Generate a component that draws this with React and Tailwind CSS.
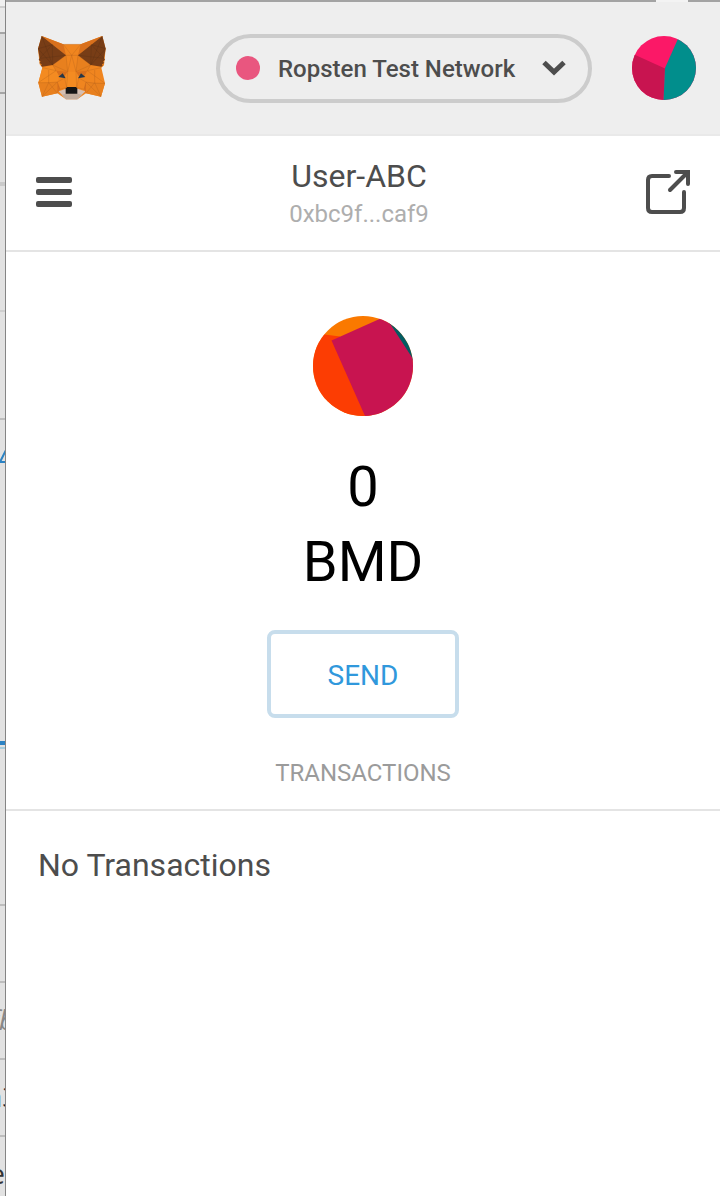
function Fox() {
  return (
    <svg viewBox="24 30 204 192" className="h-16 w-17" strokeLinejoin="round" aria-hidden="true">
      <path fill="#F0851F" d="M35 30 100 55H152L217 30 227 68 222 118 214 125 225 172 213 212 168 202 142 220H108L82 202 36 212 25 170 37 125 29 115 24 68Z" />
      <path fill="#E8801E" d="M68 117 108 88 113 137 78 134ZM182 117 144 88 138 137 172 134ZM25 170 82 168 82 202 36 212ZM225 172 168 168 168 202 213 212Z" />
      <path fill="#D9701C" d="M78 134 113 137 104 150 88 151ZM172 134 138 137 146 150 163 151ZM82 168 90 190 82 202ZM168 168 162 190 168 202ZM35 30 100 55 108 88ZM217 30 152 55 144 88Z" />
      <path fill="#F48B21" d="M113 137H138L146 156 140 184H110L104 156ZM37 125 68 117 78 134 88 153 82 168 25 170Z" />
      <path fill="#783D16" d="M35 30 108 88 68 117 37 122 33 119 35 115 28 111 32 107 26 101 29 97 24 68ZM217 30 144 88 182 117 214 122 218 119 216 115 223 111 219 107 225 101 222 97 227 68Z" />
      <path fill="#D5BFB2" d="M86 196 108 188H142L166 196 142 220H108Z" />
      <path fill="#C0AC9D" d="M96 206 108 203H142L156 206 142 220H108Z" />
      <path fill="#263748" d="M85 153 98 142 107 157ZM166 153 153 142 144 157Z" />
      <path fill="#151515" d="M112 183H138L142 187V203H107V187Z" />
      <g fill="none" stroke="#A4571B" strokeWidth="1.5" opacity=".5">
        <path d="M100 55 125 88 152 55M100 55H152M108 88H144M108 88 113 137M144 88 138 137M113 137 125 88 138 137M68 117 108 88M182 117 144 88M68 117 113 137M182 117 138 137M68 117 78 134 25 170M182 117 172 134 225 172M37 125 78 134M214 125 172 134M25 170H56L82 168 104 156M225 172H194L168 168 146 156M56 170 36 212 82 168M194 170 213 212 168 168M56 132V170L82 202M194 132V170L168 202M82 168 90 190 110 184 104 156M168 168 162 190 140 184 146 156M113 137 110 184M138 137 140 184" />
      </g>
      <g fill="none" stroke="#4F2B13" strokeWidth="1.5" opacity=".5">
        <path d="M35 30 68 117 24 68 67 56 29 97 108 88M67 56 68 117M217 30 182 117 227 68 184 56 222 97 144 88M184 56 182 117" />
      </g>
    </svg>
  );
}

function AccountBadge() {
  return (
    <svg viewBox="0 0 64 64" className="size-16 rounded-full" aria-hidden="true">
      <path fill="#FB1867" d="M0 0H64V64H0Z" />
      <path fill="#C81450" d="M0 17.5 33 32.5 31.5 64H0Z" />
      <path fill="#018E8C" d="M33 32 49 -4H64V64H31.5Z" />
    </svg>
  );
}

function TokenBadge() {
  return (
    <svg viewBox="0 0 100 100" className="size-[100px] rounded-full" aria-hidden="true">
      <path fill="#FA7900" d="M0 0H100V100H0Z" />
      <path fill="#FC3D03" d="M0 17 27 20.5 60 100H0Z" />
      <path fill="#035B62" d="M74 0H100V45L76 7Z" />
      <path fill="#C81450" d="M18.5 24.5 71 1 76 6 100 43V100H52Z" />
    </svg>
  );
}

function BackgroundPage() {
  return (
    <div className="w-1.5 shrink-0 overflow-hidden border-r border-[#858585] bg-[#e2e2e2] font-['Open_Sans',sans-serif] text-[28px] leading-8" aria-hidden="true">
      <div className="h-2 border-b-2 border-[#cfcfcf] bg-[#f0f0f0]" />
      <div className="h-[26px] border-b-2 border-[#a5a5a5] bg-[#e9e9e9]" />
      <div className="h-15 border-b-2 border-[#a5a5a5] bg-[#dcdcdc]" />
      <div className="h-23 border-b-4 border-[#cacaca]" />
      <div className="h-[126px] border-b-2 border-[#cfcfcf]" />
      <div className="h-27 border-b-2 border-[#bdbdbd]" />
      <div className="flex h-[325px] justify-start border-b-4 border-[#2c83c4] pt-6">
        <svg viewBox="0 0 5 14" className="mt-1.5 h-3.5 w-[5px] shrink-0" fill="none" stroke="#2c83c4" strokeWidth="2">
          <path d="M6 0 0 12H6" />
        </svg>
      </div>
      <div className="h-1 border-b-2 border-[#a8cede]" />
      <div className="h-[157px] border-b-2 border-[#bdbdbd]" />
      <div className="h-[77px] border-b-2 border-[#bdbdbd]" />
      <div className="flex h-[77px] justify-center border-b-2 border-[#bdbdbd] pt-5 text-[#888888] italic">fb</div>
      <div className="flex h-[77px] justify-center border-b-2 border-[#bdbdbd] pt-5 text-[#1b2233]">a3</div>
      <div className="flex h-[59px] justify-end pt-5 text-[#333333]">e</div>
    </div>
  );
}

export default function App() {
  return (
    <div className="flex min-h-screen bg-white font-[Roboto,sans-serif] text-[#4d4d4d]">
      <BackgroundPage />
      <main className="flex min-w-0 flex-1 flex-col">
        <div className="flex h-0.5 justify-end bg-[#a3a3a3] pr-8" aria-hidden="true">
          <div className="w-8 bg-[#f3f3f3]" />
        </div>
        <header className="flex h-[134px] items-center justify-between border-b-2 border-[#e9e9e9] bg-[#eeeeee] pr-6 pl-8">
          <Fox />
          <div className="flex items-center gap-10">
            <button type="button" className="flex h-[69px] w-[376px] items-center rounded-full border-4 border-[#cccccc] pr-[22px] pl-4">
              <span className="size-6 rounded-full bg-[#e9567f]" />
              <span className="ml-[18px] pt-0.5 text-[24px] leading-8 font-medium whitespace-nowrap">Ropsten Test Network</span>
              <svg viewBox="0 0 24 16" className="ml-auto h-4 w-6" fill="none" stroke="currentColor" strokeWidth="5" aria-hidden="true">
                <path d="M2 2.5 12 12 22 2.5" />
              </svg>
            </button>
            <button type="button" aria-label="My accounts" className="rounded-full">
              <AccountBadge />
            </button>
          </div>
        </header>

        <section className="flex h-29 items-center justify-between border-b-2 border-[#e4e4e4] pr-7 pb-0.5 pl-7.5">
          <button type="button" aria-label="Menu" className="flex w-[38px] flex-col gap-1.5">
            <span className="h-1.5 w-9 rounded-xs bg-[#4d4d4d]" />
            <span className="h-1.5 w-9 rounded-xs bg-[#4d4d4d]" />
            <span className="h-1.5 w-9 rounded-xs bg-[#4d4d4d]" />
          </button>
          <div className="pt-1 text-center">
            <h1 className="text-[32px] leading-10">User-ABC</h1>
            <p className="text-[24px] leading-9 text-[#aeaeae]">0xbc9f...caf9</p>
          </div>
          <button type="button" aria-label="Open in new window">
            <svg viewBox="0 0 48 48" className="size-12" fill="none" stroke="currentColor" strokeWidth="4" strokeLinecap="round" strokeLinejoin="round" aria-hidden="true">
              <path d="M25 8H8Q4 8 4 12V40Q4 44 8 44H36Q40 44 40 40V24" />
              <path d="M26 22 43 5" />
              <path d="M32 4H44V16" strokeLinejoin="miter" />
            </svg>
          </button>
        </section>

        <section className="flex flex-col items-center border-b-2 border-[#e4e4e4] pt-16 pb-5">
          <TokenBadge />
          <div className="mt-[34px] flex flex-col items-center text-[56px] leading-[75px] text-black">
            <span>0</span>
            <span>BMD</span>
          </div>
          <button type="button" className="mt-[30px] h-22 w-48 rounded-lg border-4 border-[#c7ddec] pt-[3px] text-[28px] leading-8 text-[#3098dc]">SEND</button>
          <h2 className="mt-[39px] text-[24px] leading-8 text-[#9b9b9b]">TRANSACTIONS</h2>
        </section>

        <section className="px-8 py-[30px]">
          <p className="text-[32px] leading-12">No Transactions</p>
        </section>
      </main>
    </div>
  );
}
